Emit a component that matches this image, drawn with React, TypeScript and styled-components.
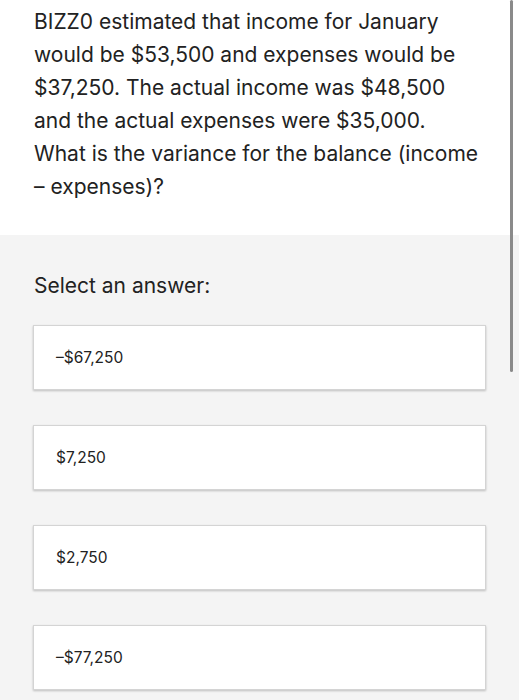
import React from "react";
import styled, { createGlobalStyle } from "styled-components";

const Global = createGlobalStyle`
  html, body { margin: 0; padding: 0; background: #f4f4f4; }
  body { font-family: Inter, "Noto Sans", "Liberation Sans", sans-serif; color: #222; -webkit-font-smoothing: antialiased; }
`;

const Page = styled.div`
  position: relative;
  width: 519px;
  height: 700px;
  overflow: hidden;
  background: #f4f4f4;
`;

const QuestionPanel = styled.section`
  background: #ffffff;
  padding: 5px 10px 32px 34px;
`;

const QuestionText = styled.p`
  margin: 0;
  font-size: 21px;
  line-height: 33px;
  color: #222;
  white-space: pre-line;
`;

const AnswerPanel = styled.section`
  padding: 39px 33px 0 33px;
  display: flex;
  flex-direction: column;
`;

const Prompt = styled.h2`
  margin: 0 0 27px 1px;
  font-size: 21px;
  font-weight: 400;
  line-height: 24px;
  color: #222;
`;

const Options = styled.div`
  display: flex;
  flex-direction: column;
  gap: 35px;
`;

const Option = styled.button`
  box-sizing: border-box;
  width: 453px;
  height: 65px;
  display: flex;
  align-items: center;
  padding: 0 0 0 22px;
  background: #fff;
  border: 1px solid #d4d4d4;
  border-radius: 0;
  box-shadow: 0 1px 2px rgba(0, 0, 0, 0.22);
  font-family: inherit;
  font-size: 15.5px;
  color: #222;
  text-align: left;
  cursor: pointer;
`;

const ScrollThumb = styled.div`
  position: absolute;
  top: 0;
  left: 510px;
  width: 3px;
  height: 372px;
  border-radius: 2px;
  background: #8a8a8a;
`;

const question =
  "BIZZ0 estimated that income for January\nwould be $53,500 and expenses would be\n$37,250. The actual income was $48,500\nand the actual expenses were $35,000.\nWhat is the variance for the balance (income\n– expenses)?";

const answers = ["–$67,250", "$7,250", "$2,750", "–$77,250"];

export default function App() {
  return (
    <Page>
      <Global />
      <QuestionPanel>
        <QuestionText>{question}</QuestionText>
      </QuestionPanel>
      <AnswerPanel>
        <Prompt>Select an answer:</Prompt>
        <Options>
          {answers.map((a) => (
            <Option key={a}>{a}</Option>
          ))}
        </Options>
      </AnswerPanel>
      <ScrollThumb />
    </Page>
  );
}
